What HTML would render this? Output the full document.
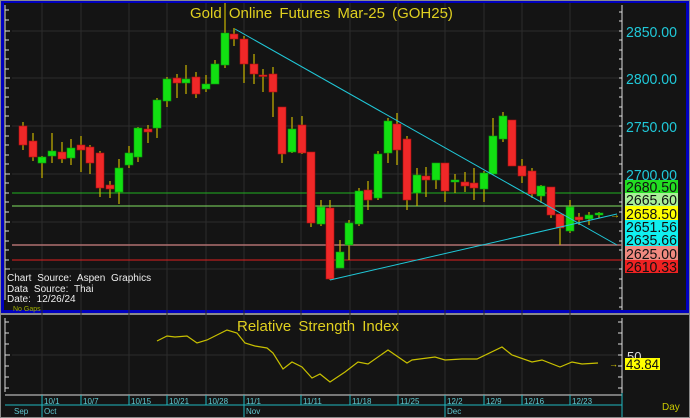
<!DOCTYPE html>
<html><head><meta charset="utf-8"><style>
html,body{margin:0;padding:0;background:#888;}
svg{display:block;font-family:"Liberation Sans",sans-serif;}
</style></head><body>
<svg width="690" height="418" viewBox="0 0 690 418" xmlns="http://www.w3.org/2000/svg">
<rect x="0" y="0" width="690" height="418" fill="#8a8a8a"/>
<rect x="1" y="1" width="688" height="312" fill="#0000c0"/>
<rect x="4" y="3" width="682" height="307" fill="#141414"/>
<rect x="1" y="315" width="688" height="102" fill="#141414"/>
<g stroke="#2c2c2c" stroke-width="1">
<line x1="12" y1="31" x2="622" y2="31"/><line x1="12" y1="78" x2="622" y2="78"/>
<line x1="12" y1="126" x2="622" y2="126"/><line x1="12" y1="174" x2="622" y2="174"/>
<line x1="12" y1="222" x2="622" y2="222"/><line x1="12" y1="269" x2="622" y2="269"/>
<line x1="12" y1="355" x2="622" y2="355"/>
<line x1="42" y1="3" x2="42" y2="395"/><line x1="81" y1="3" x2="81" y2="395"/>
<line x1="129" y1="3" x2="129" y2="395"/><line x1="167" y1="3" x2="167" y2="395"/>
<line x1="206" y1="3" x2="206" y2="395"/><line x1="244" y1="3" x2="244" y2="395"/>
<line x1="301" y1="3" x2="301" y2="395"/><line x1="350" y1="3" x2="350" y2="395"/>
<line x1="398" y1="3" x2="398" y2="395"/><line x1="445" y1="3" x2="445" y2="395"/>
<line x1="484" y1="3" x2="484" y2="395"/><line x1="522" y1="3" x2="522" y2="395"/>
<line x1="570" y1="3" x2="570" y2="395"/>
</g>
<g stroke="#ddd" stroke-width="1">
<line x1="5" y1="10" x2="9" y2="10"/><line x1="5" y1="20" x2="9" y2="20"/><line x1="5" y1="31" x2="10" y2="31"/><line x1="5" y1="40" x2="9" y2="40"/><line x1="5" y1="50" x2="9" y2="50"/><line x1="5" y1="59" x2="9" y2="59"/><line x1="5" y1="69" x2="9" y2="69"/><line x1="5" y1="78" x2="10" y2="78"/><line x1="5" y1="88" x2="9" y2="88"/><line x1="5" y1="97" x2="9" y2="97"/><line x1="5" y1="107" x2="9" y2="107"/><line x1="5" y1="116" x2="9" y2="116"/><line x1="5" y1="126" x2="10" y2="126"/><line x1="5" y1="136" x2="9" y2="136"/><line x1="5" y1="145" x2="9" y2="145"/><line x1="5" y1="155" x2="9" y2="155"/><line x1="5" y1="164" x2="9" y2="164"/><line x1="5" y1="174" x2="10" y2="174"/><line x1="5" y1="183" x2="9" y2="183"/><line x1="5" y1="193" x2="9" y2="193"/><line x1="5" y1="202" x2="9" y2="202"/><line x1="5" y1="212" x2="9" y2="212"/><line x1="5" y1="222" x2="10" y2="222"/><line x1="5" y1="231" x2="9" y2="231"/><line x1="5" y1="241" x2="9" y2="241"/><line x1="5" y1="250" x2="9" y2="250"/><line x1="5" y1="260" x2="9" y2="260"/><line x1="5" y1="269" x2="10" y2="269"/>
<line x1="5" y1="322" x2="9" y2="322"/><line x1="5" y1="333" x2="9" y2="333"/><line x1="5" y1="344" x2="9" y2="344"/><line x1="5" y1="355" x2="10" y2="355"/><line x1="5" y1="366" x2="9" y2="366"/><line x1="5" y1="377" x2="9" y2="377"/><line x1="5" y1="388" x2="9" y2="388"/>
<line x1="5" y1="318" x2="5" y2="392"/><line x1="5" y1="5" x2="5" y2="300"/>
</g>
<g stroke="#ddd" stroke-width="1">
<line x1="622" y1="5" x2="622" y2="310"/>
<line x1="622" y1="318" x2="622" y2="393"/>
<line x1="619" y1="12" x2="622" y2="12"/><line x1="619" y1="21" x2="622" y2="21"/><line x1="619" y1="31" x2="622" y2="31"/><line x1="619" y1="40" x2="622" y2="40"/><line x1="619" y1="50" x2="622" y2="50"/><line x1="619" y1="59" x2="622" y2="59"/><line x1="619" y1="69" x2="622" y2="69"/><line x1="619" y1="78" x2="622" y2="78"/><line x1="619" y1="88" x2="622" y2="88"/><line x1="619" y1="97" x2="622" y2="97"/><line x1="619" y1="107" x2="622" y2="107"/><line x1="619" y1="116" x2="622" y2="116"/><line x1="619" y1="126" x2="622" y2="126"/><line x1="619" y1="136" x2="622" y2="136"/><line x1="619" y1="145" x2="622" y2="145"/><line x1="619" y1="155" x2="622" y2="155"/><line x1="619" y1="164" x2="622" y2="164"/><line x1="619" y1="174" x2="622" y2="174"/><line x1="619" y1="183" x2="622" y2="183"/><line x1="619" y1="193" x2="622" y2="193"/><line x1="619" y1="202" x2="622" y2="202"/><line x1="619" y1="212" x2="622" y2="212"/><line x1="619" y1="222" x2="622" y2="222"/><line x1="619" y1="231" x2="622" y2="231"/><line x1="619" y1="241" x2="622" y2="241"/><line x1="619" y1="250" x2="622" y2="250"/><line x1="619" y1="260" x2="622" y2="260"/><line x1="619" y1="269" x2="622" y2="269"/><line x1="619" y1="279" x2="622" y2="279"/><line x1="619" y1="288" x2="622" y2="288"/><line x1="619" y1="298" x2="622" y2="298"/><line x1="619" y1="307" x2="622" y2="307"/>
<line x1="618" y1="322" x2="622" y2="322"/><line x1="618" y1="333" x2="622" y2="333"/><line x1="618" y1="344" x2="622" y2="344"/><line x1="618" y1="355" x2="622" y2="355"/><line x1="618" y1="366" x2="622" y2="366"/><line x1="618" y1="377" x2="622" y2="377"/><line x1="618" y1="388" x2="622" y2="388"/>
</g>
<line x1="12" y1="193" x2="622" y2="193" stroke="#20b020" stroke-width="1"/>
<line x1="12" y1="206" x2="622" y2="206" stroke="#80e060" stroke-width="1"/>
<line x1="12" y1="245" x2="622" y2="245" stroke="#b07070" stroke-width="1.5"/>
<line x1="12" y1="260" x2="622" y2="260" stroke="#e02020" stroke-width="1"/>
<g stroke="#c8b400" stroke-width="1.2">
<line x1="23" y1="122" x2="23" y2="150"/><line x1="33" y1="133" x2="33" y2="161"/><line x1="42" y1="156" x2="42" y2="178"/><line x1="52" y1="133" x2="52" y2="163"/><line x1="62" y1="142" x2="62" y2="163"/><line x1="71" y1="139" x2="71" y2="165"/><line x1="81" y1="136" x2="81" y2="172"/><line x1="90" y1="145" x2="90" y2="174"/><line x1="100" y1="151" x2="100" y2="197"/><line x1="110" y1="181" x2="110" y2="198"/><line x1="119" y1="159" x2="119" y2="204"/><line x1="129" y1="146" x2="129" y2="168"/><line x1="138" y1="127" x2="138" y2="162"/><line x1="148" y1="125" x2="148" y2="143"/><line x1="157" y1="98" x2="157" y2="138"/><line x1="167" y1="77" x2="167" y2="107"/><line x1="177" y1="74" x2="177" y2="98"/><line x1="186" y1="65" x2="186" y2="94"/><line x1="196" y1="72" x2="196" y2="98"/><line x1="206" y1="75" x2="206" y2="92"/><line x1="215" y1="60" x2="215" y2="84"/><line x1="225" y1="3" x2="225" y2="68"/><line x1="234" y1="28" x2="234" y2="46"/><line x1="244" y1="36" x2="244" y2="83"/><line x1="254" y1="54" x2="254" y2="84"/><line x1="263" y1="69" x2="263" y2="92"/><line x1="273" y1="67" x2="273" y2="117"/><line x1="282" y1="107" x2="282" y2="163"/><line x1="292" y1="117" x2="292" y2="153"/><line x1="302" y1="116" x2="302" y2="154"/><line x1="311" y1="152" x2="311" y2="227"/><line x1="321" y1="200" x2="321" y2="226"/><line x1="330" y1="200" x2="330" y2="280"/><line x1="340" y1="240" x2="340" y2="268"/><line x1="349" y1="220" x2="349" y2="260"/><line x1="359" y1="188" x2="359" y2="226"/><line x1="368" y1="181" x2="368" y2="210"/><line x1="378" y1="151" x2="378" y2="200"/><line x1="388" y1="118" x2="388" y2="163"/><line x1="397" y1="113" x2="397" y2="165"/><line x1="407" y1="136" x2="407" y2="210"/><line x1="417" y1="168" x2="417" y2="206"/><line x1="426" y1="167" x2="426" y2="197"/><line x1="436" y1="163" x2="436" y2="189"/><line x1="445" y1="163" x2="445" y2="202"/><line x1="455" y1="174" x2="455" y2="193"/><line x1="465" y1="172" x2="465" y2="192"/><line x1="474" y1="168" x2="474" y2="200"/><line x1="484" y1="171" x2="484" y2="202"/><line x1="493" y1="118" x2="493" y2="175"/><line x1="503" y1="112" x2="503" y2="142"/><line x1="512" y1="120" x2="512" y2="166"/><line x1="522" y1="159" x2="522" y2="183"/><line x1="532" y1="168" x2="532" y2="198"/><line x1="541" y1="185" x2="541" y2="203"/><line x1="551" y1="187" x2="551" y2="218"/><line x1="560" y1="214" x2="560" y2="245"/><line x1="570" y1="200" x2="570" y2="233"/><line x1="579" y1="213" x2="579" y2="225"/><line x1="589" y1="212" x2="589" y2="225"/><line x1="599" y1="212" x2="599" y2="218"/>
</g>
<g fill="#f02828" stroke="#b01010" stroke-width="0.6">
<rect x="19" y="126" width="8" height="19"/><rect x="29" y="141" width="8" height="16"/><rect x="58" y="152" width="8" height="7"/><rect x="77" y="145" width="8" height="5"/><rect x="86" y="147" width="8" height="16"/><rect x="96" y="153" width="8" height="35"/><rect x="106" y="185" width="8" height="4"/><rect x="144" y="129" width="8" height="3"/><rect x="173" y="78" width="8" height="5"/><rect x="192" y="77" width="8" height="17"/><rect x="230" y="34" width="8" height="5"/><rect x="240" y="39" width="8" height="25"/><rect x="250" y="64" width="8" height="10"/><rect x="259" y="75" width="8" height="1.5"/><rect x="269" y="74" width="8" height="18"/><rect x="278" y="107" width="8" height="47"/><rect x="298" y="125" width="8" height="28"/><rect x="307" y="152" width="8" height="71"/><rect x="326" y="208" width="8" height="71"/><rect x="364" y="190" width="8" height="10"/><rect x="393" y="124" width="8" height="26"/><rect x="403" y="139" width="8" height="61"/><rect x="422" y="176" width="8" height="4"/><rect x="441" y="163" width="8" height="28"/><rect x="461" y="182" width="8" height="4"/><rect x="470" y="183" width="8" height="5"/><rect x="508" y="120" width="8" height="46"/><rect x="518" y="166" width="8" height="10"/><rect x="528" y="171" width="8" height="23"/><rect x="547" y="187" width="8" height="28"/><rect x="556" y="214" width="8" height="14"/><rect x="575" y="217" width="8" height="3"/>
</g>
<g fill="#12e012" stroke="#0a9a0a" stroke-width="0.6">
<rect x="38" y="157" width="8" height="6"/><rect x="48" y="151" width="8" height="5"/><rect x="67" y="148" width="8" height="10"/><rect x="115" y="168" width="8" height="24"/><rect x="125" y="153" width="8" height="12"/><rect x="134" y="128" width="8" height="29"/><rect x="153" y="100" width="8" height="28"/><rect x="163" y="79" width="8" height="22"/><rect x="182" y="79" width="8" height="4"/><rect x="202" y="84" width="8" height="5"/><rect x="211" y="64" width="8" height="20"/><rect x="221" y="33" width="8" height="32"/><rect x="288" y="129" width="8" height="23"/><rect x="317" y="207" width="8" height="17"/><rect x="336" y="252" width="8" height="16"/><rect x="345" y="223" width="8" height="22"/><rect x="355" y="191" width="8" height="33"/><rect x="374" y="154" width="8" height="44"/><rect x="384" y="121" width="8" height="32"/><rect x="413" y="175" width="8" height="18"/><rect x="432" y="163" width="8" height="17"/><rect x="451" y="180" width="8" height="2"/><rect x="480" y="173" width="8" height="16"/><rect x="489" y="136" width="8" height="38"/><rect x="499" y="116" width="8" height="23"/><rect x="537" y="186" width="8" height="10"/><rect x="566" y="207" width="8" height="24"/><rect x="585" y="215" width="8" height="4"/><rect x="595" y="213" width="8" height="2"/>
</g>
<line x1="235" y1="29" x2="617" y2="245" stroke="#20c8d8" stroke-width="1"/>
<line x1="330" y1="280" x2="617" y2="214" stroke="#20c8d8" stroke-width="1"/>
<text x="610" y="218" fill="#e0d000" font-size="10">→</text>
<text x="190" y="18" fill="#e0d020" font-size="15" word-spacing="3">Gold Online Futures Mar-25 (GOH25)</text>
<g font-size="15" fill="#20c8d8">
<text x="626" y="37" textLength="51" lengthAdjust="spacingAndGlyphs">2850.00</text><text x="626" y="84" textLength="51" lengthAdjust="spacingAndGlyphs">2800.00</text><text x="626" y="132" textLength="51" lengthAdjust="spacingAndGlyphs">2750.00</text><text x="626" y="180" textLength="51" lengthAdjust="spacingAndGlyphs">2700.00</text>
</g>
<rect x="625" y="180" width="53" height="13" fill="#22dd22"/>
<rect x="625" y="193" width="53" height="13" fill="#a8f098"/>
<rect x="625" y="206" width="53" height="14" fill="#ffff00"/>
<rect x="625" y="220" width="53" height="13" fill="#10f0f0"/>
<rect x="625" y="233" width="53" height="13" fill="#10f0f0"/>
<rect x="625" y="246" width="53" height="14" fill="#f08a80"/>
<rect x="625" y="260" width="53" height="13" fill="#ee2222"/>
<g font-size="15" fill="#111">
<text x="626" y="192" textLength="51" lengthAdjust="spacingAndGlyphs">2680.50</text><text x="626" y="205" textLength="51" lengthAdjust="spacingAndGlyphs">2665.60</text><text x="626" y="219" textLength="51" lengthAdjust="spacingAndGlyphs">2658.50</text><text x="626" y="232" textLength="51" lengthAdjust="spacingAndGlyphs">2651.56</text><text x="626" y="245" textLength="51" lengthAdjust="spacingAndGlyphs">2635.66</text><text x="626" y="259" textLength="51" lengthAdjust="spacingAndGlyphs">2625.00</text><text x="626" y="272" textLength="51" lengthAdjust="spacingAndGlyphs">2610.33</text>
</g>
<g font-size="10" fill="#eee" word-spacing="3">
<text x="7" y="281">Chart Source: Aspen Graphics</text>
<text x="7" y="292">Data Source: Thai</text>
<text x="7" y="302">Date: 12/26/24</text>
</g>
<text x="13" y="311" font-size="7" fill="#a0b000">No Gaps</text>
<text x="237" y="331" fill="#e0d020" font-size="15" word-spacing="3">Relative Strength Index</text>
<polyline fill="none" stroke="#c8c000" stroke-width="1.2" points="157,341 167,336 175,337 187,336 197,343 207,340 227,330 237,333 245,343 255,346 267,348 273,353 283,369 292,362 302,367 312,378 320,374 330,382 345,372 358,362 368,364 388,350 407,363 412,360 435,357 445,360 462,359 477,359 502,347 512,355 532,362 542,360 560,367 572,362 582,364 598,363"/>
<text x="627" y="361" fill="#ddd" font-size="13">50</text>
<text x="609" y="367" fill="#e0d000" font-size="9">→</text>
<rect x="625" y="358" width="35" height="12" fill="#ffff00"/>
<text x="626" y="369" fill="#111" font-size="14" textLength="33" lengthAdjust="spacingAndGlyphs">43.84</text>
<rect x="1" y="395" width="622" height="22" fill="#141414"/>
<line x1="5" y1="395" x2="622" y2="395" stroke="#ddd" stroke-width="1"/>
<line x1="5" y1="405" x2="622" y2="405" stroke="#20b8c0" stroke-width="1"/>
<line x1="622" y1="393" x2="622" y2="417" stroke="#20b8c0" stroke-width="1"/>
<g stroke="#20b8c0" stroke-width="1">
<line x1="42" y1="395" x2="42" y2="405"/><line x1="81" y1="395" x2="81" y2="405"/><line x1="129" y1="395" x2="129" y2="405"/><line x1="167" y1="395" x2="167" y2="405"/><line x1="206" y1="395" x2="206" y2="405"/><line x1="244" y1="395" x2="244" y2="405"/><line x1="301" y1="395" x2="301" y2="405"/><line x1="350" y1="395" x2="350" y2="405"/><line x1="398" y1="395" x2="398" y2="405"/><line x1="445" y1="395" x2="445" y2="405"/><line x1="484" y1="395" x2="484" y2="405"/><line x1="522" y1="395" x2="522" y2="405"/><line x1="570" y1="395" x2="570" y2="405"/>
<line x1="42" y1="405" x2="42" y2="417"/><line x1="244" y1="405" x2="244" y2="417"/><line x1="445" y1="405" x2="445" y2="417"/>
</g>
<g font-size="8" fill="#60c8d0">
<text x="44" y="404">10/1</text><text x="83" y="404">10/7</text><text x="131" y="404">10/15</text><text x="169" y="404">10/21</text><text x="208" y="404">10/28</text><text x="246" y="404">11/1</text><text x="303" y="404">11/11</text><text x="352" y="404">11/18</text><text x="400" y="404">11/25</text><text x="447" y="404">12/2</text><text x="486" y="404">12/9</text><text x="524" y="404">12/16</text><text x="572" y="404">12/23</text>
<text x="14" y="414">Sep</text><text x="44" y="414">Oct</text><text x="246" y="414">Nov</text><text x="447" y="414">Dec</text>
</g>
<text x="662" y="410" font-size="10" fill="#c8c800">Day</text>
</svg>
</body></html>
